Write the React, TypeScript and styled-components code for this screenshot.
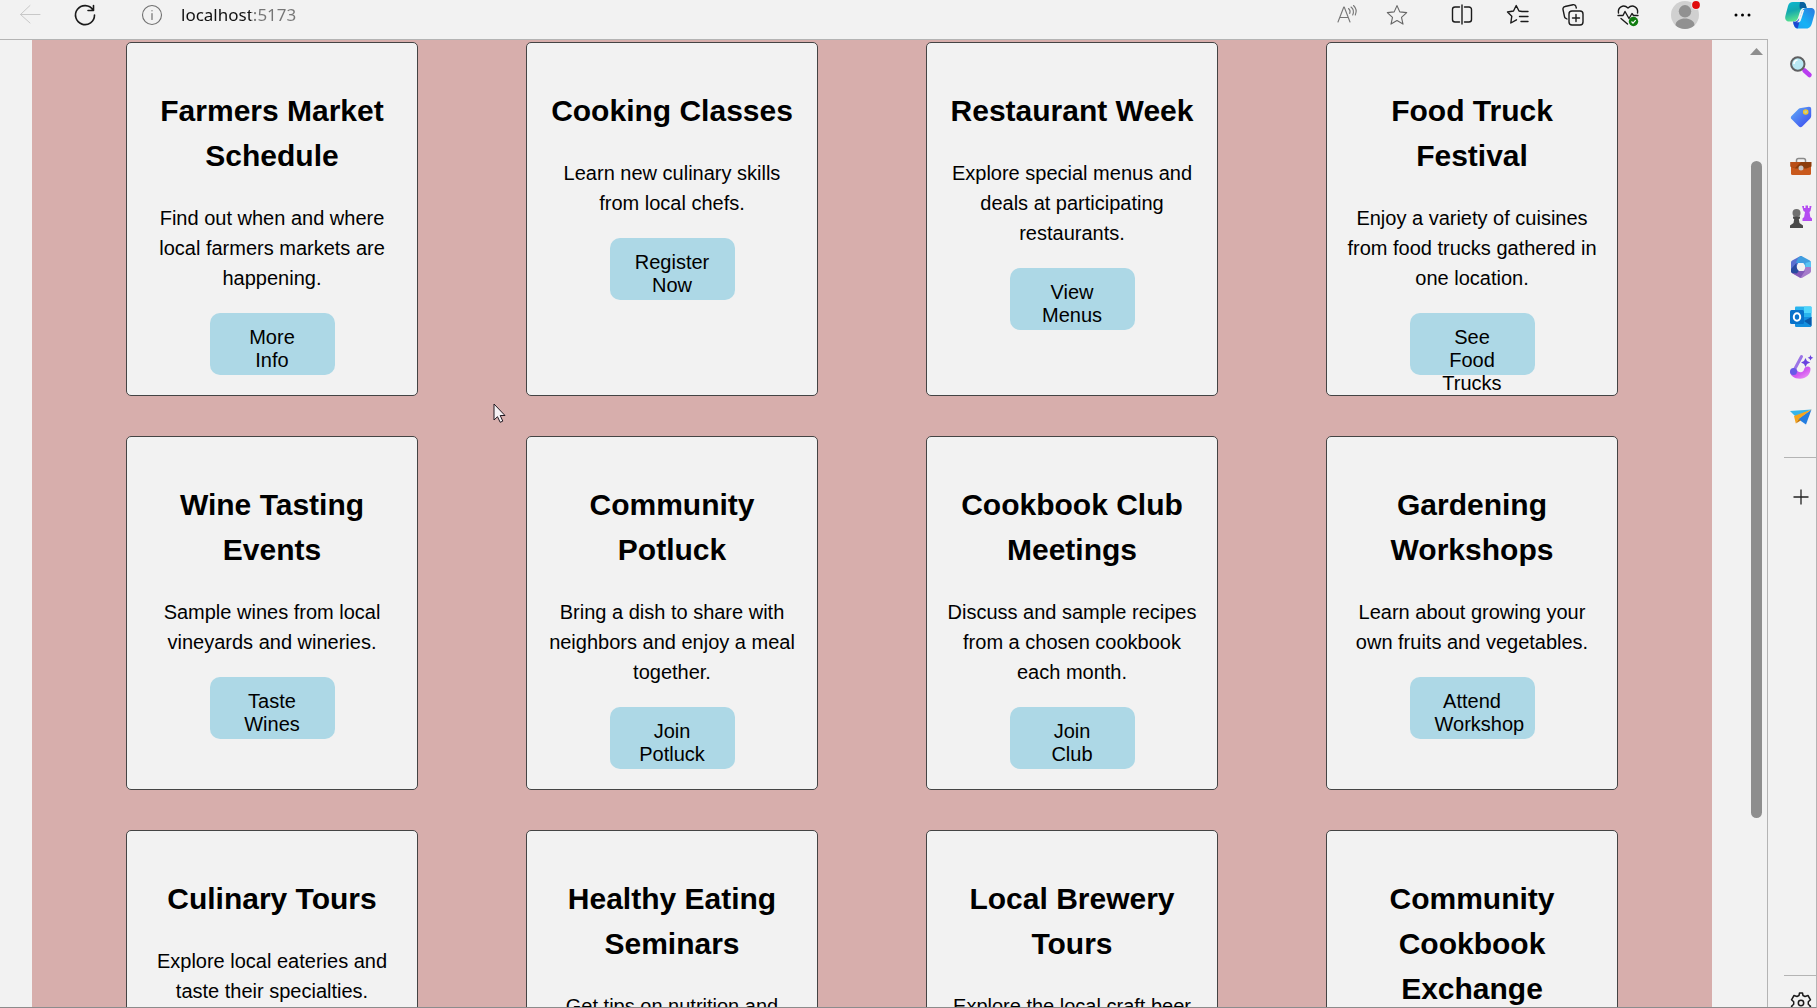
import React from "react";
import styled, { createGlobalStyle } from "styled-components";

const GlobalStyle = createGlobalStyle`
  *, *::before, *::after { box-sizing: border-box; }
  body {
    margin: 0;
    background: #f2f2f2;
    color: #000;
    font-family: "Liberation Sans", Arial, sans-serif;
    font-size: 20px;
  }
`;

const Window = styled.div`
  display: flex;
  height: 100vh;
  overflow: hidden;
  background: #f2f2f2;
  border-right: 1px solid #b4b4b4;
  border-bottom: 1px solid #8c8c8c;
`;

const Browser = styled.div`
  flex: 1;
  min-width: 0;
  display: flex;
  flex-direction: column;
`;

const Toolbar = styled.header`
  flex: none;
  display: flex;
  align-items: flex-start;
  height: 39px;
  padding: 3px 12px 0 18px;
`;

const IconButton = styled.button<{ $tone?: string; $gap?: number }>`
  flex: none;
  width: 24px;
  height: 24px;
  margin: 0 0 0 ${(p) => p.$gap ?? 0}px;
  padding: 0;
  border: 0;
  background: none;
  color: ${(p) => p.$tone ?? "#1b1b1b"};

  svg {
    display: block;
    overflow: visible;
  }
`;

/* The host part is dark and the port part is grey. */
const Address = styled.input`
  flex: 1;
  min-width: 0;
  height: 24px;
  margin: 0 0 0 17px;
  padding: 0;
  border: 0;
  outline: 0;
  background: linear-gradient(90deg, #111 70px, #767676 70px);
  background-clip: text;
  -webkit-background-clip: text;
  color: transparent;
  caret-color: #111;
  font: 17px/24px "Noto Sans", sans-serif;
`;

const Frame = styled.div`
  flex: 1;
  min-height: 0;
  display: flex;
  border-top: 1px solid #b4b4b4;
  border-right: 1px solid #b4b4b4;
`;

const Viewport = styled.div`
  flex: 1;
  min-width: 0;
  overflow: hidden;
  padding: 0 38px 0 32px;
`;

const Board = styled.main`
  display: grid;
  grid-template-columns: repeat(4, 1fr);
  row-gap: 40px;
  padding: 2px 40px 40px;
  background: #d7aeac;
`;

const Card = styled.article`
  justify-self: center;
  width: 73%;
  height: 354px;
  padding: 20px;
  border: 1px solid #444;
  border-radius: 5px;
  background: #f2f2f2;
  line-height: 30px;
  text-align: center;
`;

const CardTitle = styled.h2`
  margin: 25px 0;
  font-size: 30px;
  line-height: 45px;
`;

const CardText = styled.p`
  margin: 0 0 20px;
`;

const CardLink = styled.a`
  display: block;
  width: 125px;
  height: 62px;
  margin: 0 auto;
  padding: 13px 25px 0;
  border-radius: 10px;
  background: #add8e6;
  color: #000;
  line-height: 23px;
  text-decoration: none;
`;

const ScrollTrack = styled.div`
  flex: none;
  width: 17px;
  display: flex;
  flex-direction: column;
  align-items: center;
  padding: 8px 4px 0 0;
`;

const ScrollArrow = styled.svg`
  flex: none;
  display: block;
`;

const ScrollSpace = styled.div`
  flex: 106;
`;

const ScrollThumb = styled.div`
  flex: 657;
  width: 11px;
  border-radius: 6px;
  background: #8e8e8e;
`;

const ScrollRest = styled.div`
  flex: 189;
`;

const Sidebar = styled.nav`
  flex: none;
  width: 48px;
  display: flex;
  flex-direction: column;
  padding-left: 16px;
`;

const CopilotButton = styled(IconButton)`
  width: 32px;
  height: 30px;
`;

const AppList = styled.div`
  display: flex;
  flex-direction: column;
  gap: 26px;
  padding: 25px 0 0 5px;
`;

const Divider = styled.hr`
  width: 100%;
  height: 1px;
  margin: 28px 0 0;
  border: 0;
  background: #b4b4b4;
`;

const AddRow = styled.div`
  flex: 1;
  padding: 27px 0 0 5px;
`;

const SettingsRow = styled.div`
  flex: none;
  height: 32px;
  padding: 15px 0 0 5px;
  overflow: hidden;
  border-top: 1px solid #b4b4b4;
`;

const Pointer = styled.svg`
  position: absolute;
  left: 493px;
  top: 403px;
`;

const line = { fill: "none", stroke: "currentColor", strokeWidth: 1.4, strokeLinecap: "round", strokeLinejoin: "round" } as const;

const Svg = ({ children }: { children: React.ReactNode }) => (
  <svg width="24" height="24" viewBox="0 0 24 24" aria-hidden="true">{children}</svg>
);

const BackIcon = () => <Svg><path {...line} strokeWidth={1} d="M22 11.500H2.500M12 2.500l-9.500 9 9.500 8.500" /></Svg>;
const ReloadIcon = () => <Svg><path {...line} strokeWidth={1.600} d="M20 7A9.500 9.500 0 1 0 21.500 12M20.500 2.500v5h-5.500" /></Svg>;
const InfoIcon = () => <Svg><circle {...line} strokeWidth={1.100} cx="12" cy="12" r="9.500" /><path {...line} strokeWidth={1.200} d="M12 10.500v6M12 7.700v.1" /></Svg>;
const ReadIcon = () => <Svg><path {...line} strokeWidth={1.100} d="M3 19l5.800-15h.4L15 19M5 14.500h8M13.500 5.500c1.500 1.200 2 3 1.200 5M16 4c2.500 2 3 5 1.700 8M18.500 2.500c2.800 2.600 3.300 6 1.800 9.500" /></Svg>;
const StarIcon = () => <Svg><path {...line} strokeWidth={1.100} d="M12 2.600l2.800 6.300 6.900.7-5.200 4.700 1.500 6.800-6-3.500-6 3.500 1.500-6.800-5.200-4.700 6.900-.7z" /></Svg>;
const SplitIcon = () => <Svg><path {...line} d="M9.500 4H5a2.500 2.500 0 0 0-2.500 2.500v10A2.500 2.500 0 0 0 5 19h4.500M14.500 4H19a2.500 2.500 0 0 1 2.500 2.500v10A2.500 2.500 0 0 1 19 19h-4.500M12 2v19" /></Svg>;
const FavoritesIcon = () => <Svg><path {...line} d="M16 8.500l-3-.5-2.800-5.500L7.500 8l-6 1 4.300 4.200-1 6.800 5.700-3.200M15 8.500h7M13.500 13.500h8.500M15 18.500h7" /></Svg>;
const CollectionsIcon = () => <Svg><path {...line} d="M6 16l-1.500-.8a2 2 0 0 1-1-1.500L2 6.500A2.500 2.500 0 0 1 4 3.500l8-1.800a2.500 2.500 0 0 1 3 2l.3 1.300" /><rect {...line} x="8" y="8" width="14" height="14" rx="3" /><path {...line} d="M15 11.500v7M11.500 15h7" /></Svg>;
const HealthIcon = () => (
  <Svg>
    <path {...line} d="M2.500 10C1.500 5 7 .5 12 5c5-4.500 10.500 0 9.500 5M2 12.500h5l2-4 4 7 3-5 1.500 2H22M5 15.500l6.500 5.500" />
    <circle cx="17.500" cy="18.500" r="4.700" fill="#107c10" />
    <path d="M15.500 18.500l1.500 1.600 2.700-3" fill="none" stroke="#fff" strokeWidth="1.200" />
  </Svg>
);
const ProfileIcon = () => (
  <Svg>
    <circle cx="12" cy="12" r="14" fill="#d0d0d0" />
    <circle cx="12" cy="8.300" r="6.200" fill="#919191" />
    <path d="M2.500 22.200c0-9 19-9 19 0a14 14 0 0 1-19 0z" fill="#919191" />
    <circle cx="23" cy="2" r="4.800" fill="#f2f2f2" />
    <circle cx="23" cy="2" r="3.900" fill="#e00b0b" />
  </Svg>
);
const MoreIcon = () => <Svg><circle cx="4" cy="12" r="1.500" /><circle cx="10.500" cy="12" r="1.500" /><circle cx="17" cy="12" r="1.500" /></Svg>;

const CopilotIcon = () => (
  <svg width="32" height="28" viewBox="0 0 32 28" aria-hidden="true">
    <defs>
      <linearGradient id="cpA" x1="0" y1="0" x2="0.300" y2="1"><stop offset="0" stopColor="#0bb8d4" /><stop offset="0.500" stopColor="#13a8ae" /><stop offset="1" stopColor="#5be38f" /></linearGradient>
      <linearGradient id="cpB" x1="1" y1="0" x2="0" y2="1"><stop offset="0" stopColor="#2a78df" /><stop offset="0.600" stopColor="#16b2f5" /><stop offset="1" stopColor="#1f9cf0" /></linearGradient>
    </defs>
    <path d="M9 1h9c3 0 4 2 4.500 6-4-1-6 1-7 5l-1.500 5c-1 3-3 3.500-5 3.500H5c-3 0-4.500-2.500-3.500-6L4 5c.8-2.600 2.200-4 5-4z" fill="url(#cpA)" />
    <path d="M16 1h2c3 0 4 2 4.700 6h-3.200c-2 0-3 .5-3.500 1-1-4 0-5.500 0-7z" fill="#075f9e" />
    <path d="M23 7h4c3 0 4.500 2.500 3.500 6l-2.500 9c-.8 3-2.400 5.500-5.500 5.500H14c-3 0-4-2-4.700-6 4 .5 5.800-1 6.700-5l1.600-5C18.500 8 20 7 23 7z" fill="url(#cpB)" />
    <path d="M9 20.500c3 .5 5-.5 6-3 .8 4-.5 7-1.500 10-2.500-.5-3.900-3-4.500-7z" fill="#1c48d0" />
    <path d="M18.500 9h1.700l-3.400 10.500c-.5 1.200-1.300 1.800-2.300 1.800h-2c1.500-.8 2.300-1.800 2.800-3.300z" fill="#f2f2f2" />
  </svg>
);
const SearchIcon = () => <Svg><path d="M15.500 15.500l5 4.500" stroke="#b93df0" strokeWidth="4.500" strokeLinecap="round" /><circle cx="8.800" cy="9" r="6.700" fill="#b9e8f3" stroke="#606062" strokeWidth="2" /><path d="M5 9c0-2 1.500-3.700 3.500-4" fill="none" stroke="#fff" strokeWidth="1.500" /></Svg>;
const TagIcon = () => (
  <Svg>
    <defs><linearGradient id="tag" x1="0" y1="0" x2="1" y2="1"><stop offset="0" stopColor="#62b0f6" /><stop offset="1" stopColor="#3a45ef" /></linearGradient></defs>
    <path d="M12 3l8-1.200c1.400 0 2.200.8 2.200 2.200v7c0 1-.4 1.700-1 2.400l-8 8c-1 1-2.300 1-3.300 0l-7.400-7.300c-.9-1-.9-2.200 0-3.200l7-7c.7-.6 1.500-.8 2.500-.9z" fill="url(#tag)" />
    <circle cx="16.700" cy="7" r="2.100" fill="#bcd3a0" stroke="#f6c425" strokeWidth="1.400" />
  </Svg>
);
const BriefcaseIcon = () => <Svg><path d="M7.500 8V5.500c0-1.300.8-2 2-2h5c1.200 0 2 .7 2 2V8" fill="none" stroke="#8a8a8a" strokeWidth="1.500" /><rect x="2" y="7" width="20" height="13" rx="1.500" fill="#c9591d" /><path d="M1.500 7h21v4.500l-5 2h-11l-5-2z" fill="#8c3c0b" /><path d="M1.500 7H12l-6 6-4.500-1.500z" fill="#b94e17" /><circle cx="12" cy="13" r="2.500" fill="#c8c4c2" /></Svg>;
const ChessIcon = () => <Svg><path d="M13 1h2v2h1.500V.5h2.500V3h1.500V1h2l-1 5-1 1 .8 5 1.700 1.500v2.500H13.500v-2.500l1.600-1.500L16 7l-1.500-1z" fill="#b44bf2" /><circle cx="7.500" cy="8" r="4" fill="#707070" /><path d="M4 11.500h7v2l-1.200.5.700 4 3.500 2.500V23H1v-2.500L4.500 18l.7-4-1.200-.5z" fill="#4a4a4a" /></Svg>;
const M365Icon = () => (
  <Svg>
    <path d="M2 7.500c0-.9.4-1.500 1.200-2L11 1.200c.8-.4 1.500-.4 2.200 0L9 8.500 7.500 12v4.500L4 17.500 2 15z" fill="#5a6fd0" />
    <path d="M12 1c.5 0 1 .1 1.400.4l7.400 4.200c.8.5 1.200 1.200 1.200 2v8l-5.500-3.400L14.300 8H7l2-5.300z" fill="#3f9ee0" />
    <path d="M16.500 12.200V8l5.300-1.600c.2.400.2.800.2 1.200v9z" fill="#58c4f4" />
    <path d="M22 12v4.300c0 .8-.4 1.500-1.200 2L13.200 22.700c-.8.400-1.600.4-2.400 0L3.200 18.300 10 16h4.500l2-4z" fill="#a67bcb" />
    <path d="M2 14.500l5.500-2.500 2.300 4H16l-4.500 6.800-8.300-4.500c-.8-.5-1.200-1.200-1.200-2z" fill="#8359b8" />
    <path d="M2 14l5.500-6v4.500l2.300 3.500-2 2.500-4.800-.5C2.200 17.300 2 16.500 2 16z" fill="#284a9e" />
    <circle cx="12" cy="12" r="4" fill="#f2f2f2" />
  </Svg>
);
const OutlookIcon = () => <Svg><rect x="6" y="1.500" width="16.500" height="12" rx="1" fill="#28b3ee" /><path d="M15 1.500h6.500c.6 0 1 .4 1 1V8H15z" fill="#4fd5fb" /><path d="M6 12h16.500v8.500c0 .8-.5 1.500-1.500 1.500H7.500c-.9 0-1.500-.5-1.500-1.500z" fill="#1490df" /><path d="M22.500 12v9L15 16z" fill="#0a5aaa" /><rect x="1" y="5" width="14" height="14" rx="1.500" fill="#0872ca" /><ellipse cx="8" cy="12" rx="3.200" ry="3.700" fill="none" stroke="#fff" strokeWidth="2" /></Svg>;
const DesignerIcon = () => (
  <Svg>
    <defs><linearGradient id="dsg" x1="0" y1="0" x2="1" y2="1"><stop offset="0" stopColor="#8d63ea" /><stop offset="0.550" stopColor="#d45af0" /><stop offset="1" stopColor="#f2a0f6" /></linearGradient></defs>
    <path d="M1 16c0 4.500 4 7.700 10 7.700 6 0 10.500-4.200 10.500-9.700 0-1.500-1-2.500-2.500-2.500-2.500 0-3.500 1-4 3s-1.500 2.700-3.200 2.700c-2.300 0-3.600-1-4.300-3z" fill="url(#dsg)" />
    <path d="M12.500 1.500L5.500 14.500" stroke="#9b74e6" strokeWidth="3" strokeLinecap="round" />
    <circle cx="4.500" cy="16.500" r="3.500" fill="#6758e8" />
    <path d="M16.500 3l1.500 3 3.200 1.500L18 9l-1.500 3L15 9l-3-1.500L15 6zM21.500 0l.9 1.900 1.900.9-1.900.9-.9 1.900-.9-1.900-1.900-.9 1.900-.9z" fill="#6a42e0" />
  </Svg>
);
const PlaneIcon = () => <Svg><path d="M1 6l21.500-1.500L7 12z" fill="#36b5ea" /><path d="M22.500 4.500L17 19.500 9 14z" fill="#237de0" /><path d="M22.500 4.500L5 11l1.800 7.500 3-4.500z" fill="#f6a51c" /><path d="M6.800 18.500l3-4.500 2 1.500z" fill="#c67708" /></Svg>;
const PlusIcon = () => <Svg><path d="M4.500 12h15M12 4.500v15" stroke="#222" strokeWidth="1.300" /></Svg>;
const GearIcon = () => <Svg><path {...line} strokeWidth={1.500} d="M10 4.500L10.500 2h3l.5 2.500 2 1 3-1 2.500 4.300-2.200 2v2.400l2.200 2-2.500 4.300-3-1-2 1-.5 2.500h-3l-.5-2.500-2-1-3 1-2.500-4.300 2.200-2v-2.400l-2.200-2L5 4.500l3 1z" /><circle {...line} strokeWidth={1.500} cx="12" cy="12" r="2.700" /></Svg>;

const tools: { name: string; Icon: React.FC; gap: number; tone?: string }[] = [
  { name: "Read aloud", Icon: ReadIcon, gap: 0, tone: "#767676" },
  { name: "Add to favorites", Icon: StarIcon, gap: 26, tone: "#666" },
  { name: "Split screen", Icon: SplitIcon, gap: 41 },
  { name: "Favorites", Icon: FavoritesIcon, gap: 32 },
  { name: "Collections", Icon: CollectionsIcon, gap: 31 },
  { name: "Browser essentials", Icon: HealthIcon, gap: 31 },
  { name: "Profile", Icon: ProfileIcon, gap: 33 },
  { name: "Settings and more", Icon: MoreIcon, gap: 35 },
];

const apps: { name: string; Icon: React.FC }[] = [
  { name: "Search", Icon: SearchIcon },
  { name: "Shopping", Icon: TagIcon },
  { name: "Tools", Icon: BriefcaseIcon },
  { name: "Games", Icon: ChessIcon },
  { name: "Microsoft 365", Icon: M365Icon },
  { name: "Outlook", Icon: OutlookIcon },
  { name: "Designer", Icon: DesignerIcon },
  { name: "Drop", Icon: PlaneIcon },
];

const events = [
  { title: "Farmers Market Schedule", text: "Find out when and where local farmers markets are happening.", action: "More Info" },
  { title: "Cooking Classes", text: "Learn new culinary skills from local chefs.", action: "Register Now" },
  { title: "Restaurant Week", text: "Explore special menus and deals at participating restaurants.", action: "View Menus" },
  { title: "Food Truck Festival", text: "Enjoy a variety of cuisines from food trucks gathered in one location.", action: "See Food Trucks" },
  { title: "Wine Tasting Events", text: "Sample wines from local vineyards and wineries.", action: "Taste Wines" },
  { title: "Community Potluck", text: "Bring a dish to share with neighbors and enjoy a meal together.", action: "Join Potluck" },
  { title: "Cookbook Club Meetings", text: "Discuss and sample recipes from a chosen cookbook each month.", action: "Join Club" },
  { title: "Gardening Workshops", text: "Learn about growing your own fruits and vegetables.", action: "Attend Workshop" },
  { title: "Culinary Tours", text: "Explore local eateries and taste their specialties." },
  { title: "Healthy Eating Seminars", text: "Get tips on nutrition and" },
  { title: "Local Brewery Tours", text: "Explore the local craft beer" },
  { title: "Community Cookbook Exchange" },
];

export default function App() {
  return (
    <>
      <GlobalStyle />
      <Window>
        <Browser>
          <Toolbar>
            <IconButton aria-label="Back" $tone="#c8c8c8"><BackIcon /></IconButton>
            <IconButton aria-label="Refresh" $gap={31}><ReloadIcon /></IconButton>
            <IconButton aria-label="Site information" $tone="#707070" $gap={43}><InfoIcon /></IconButton>
            <Address aria-label="Address" defaultValue="localhost:5173" spellCheck={false} />
            {tools.map(({ name, Icon, gap, tone }) => (
              <IconButton key={name} aria-label={name} $gap={gap} $tone={tone}><Icon /></IconButton>
            ))}
          </Toolbar>
          <Frame>
            <Viewport>
              <Board>
                {events.map((event) => (
                  <Card key={event.title}>
                    <CardTitle>{event.title}</CardTitle>
                    {event.text && <CardText>{event.text}</CardText>}
                    {event.action && <CardLink href="#">{event.action}</CardLink>}
                  </Card>
                ))}
              </Board>
            </Viewport>
            <ScrollTrack>
              <ScrollArrow width="13" height="7" viewBox="0 0 13 7"><path d="M0 7L6.500 0 13 7z" fill="#8e8e8e" /></ScrollArrow>
              <ScrollSpace />
              <ScrollThumb />
              <ScrollRest />
            </ScrollTrack>
          </Frame>
        </Browser>
        <Sidebar>
          <CopilotButton aria-label="Copilot"><CopilotIcon /></CopilotButton>
          <AppList>
            {apps.map(({ name, Icon }) => (
              <IconButton key={name} aria-label={name}><Icon /></IconButton>
            ))}
          </AppList>
          <Divider />
          <AddRow><IconButton aria-label="Customize"><PlusIcon /></IconButton></AddRow>
          <SettingsRow><IconButton aria-label="Settings"><GearIcon /></IconButton></SettingsRow>
        </Sidebar>
      </Window>
      <Pointer width="13" height="20" viewBox="0 0 13 20" aria-hidden="true">
        <path d="M1 1v16l3.500-3.300 2.700 5.600 2.600-1.200-2.600-5.600H12z" fill="#f6f2f4" stroke="#221a22" strokeWidth="1" />
      </Pointer>
    </>
  );
}
